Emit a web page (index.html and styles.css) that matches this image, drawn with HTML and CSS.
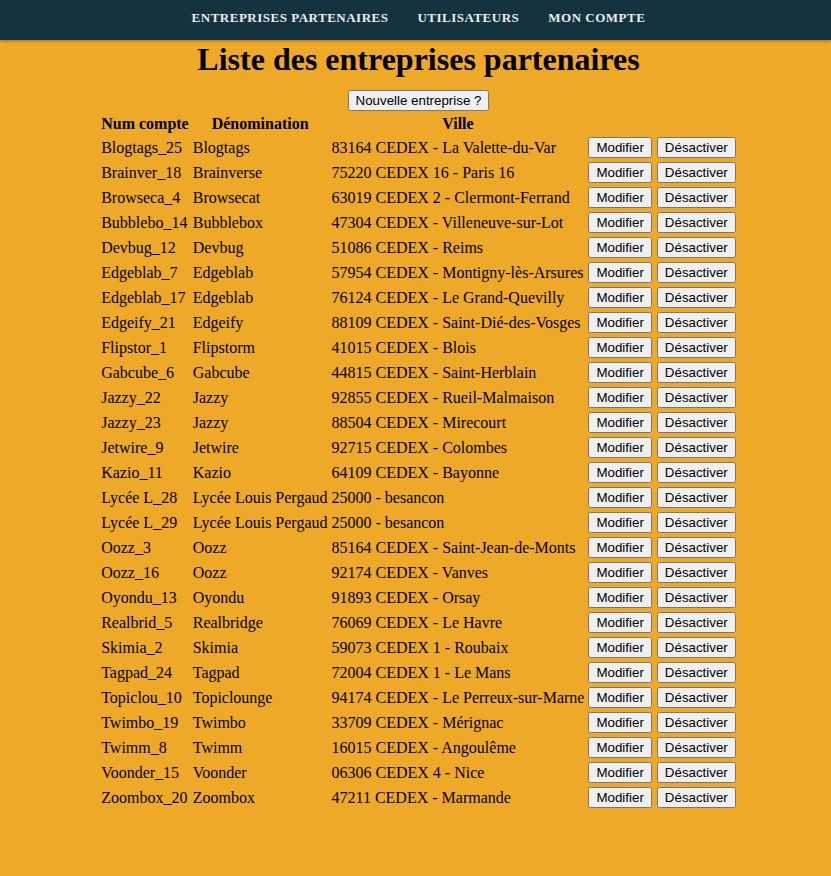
FILE: index.html
```html
<!DOCTYPE html>
<html lang="fr">
<head>
<meta charset="utf-8">
<title>Liste des entreprises partenaires</title>
<link rel="stylesheet" href="styles.css">
</head>
<body>
<nav class="topnav">
  <a class="nav-link" href="#">Entreprises partenaires</a>
  <a class="nav-link" href="#">Utilisateurs</a>
  <a class="nav-link" href="#">Mon compte</a>
</nav>
<main class="content">
  <h1 class="title">Liste des entreprises partenaires</h1>
  <div class="new-wrap"><button class="btn">Nouvelle entreprise ?</button></div>
  <table class="list">
    <thead>
      <tr><th>Num compte</th><th>Dénomination</th><th>Ville</th><th></th><th></th></tr>
    </thead>
    <tbody>
      <tr><td>Blogtags_25</td><td>Blogtags</td><td>83164 CEDEX - La Valette-du-Var</td><td><button class="btn btn-mod">Modifier</button></td><td><button class="btn">Désactiver</button></td></tr>
      <tr><td>Brainver_18</td><td>Brainverse</td><td>75220 CEDEX 16 - Paris 16</td><td><button class="btn btn-mod">Modifier</button></td><td><button class="btn">Désactiver</button></td></tr>
      <tr><td>Browseca_4</td><td>Browsecat</td><td>63019 CEDEX 2 - Clermont-Ferrand</td><td><button class="btn btn-mod">Modifier</button></td><td><button class="btn">Désactiver</button></td></tr>
      <tr><td>Bubblebo_14</td><td>Bubblebox</td><td>47304 CEDEX - Villeneuve-sur-Lot</td><td><button class="btn btn-mod">Modifier</button></td><td><button class="btn">Désactiver</button></td></tr>
      <tr><td>Devbug_12</td><td>Devbug</td><td>51086 CEDEX - Reims</td><td><button class="btn btn-mod">Modifier</button></td><td><button class="btn">Désactiver</button></td></tr>
      <tr><td>Edgeblab_7</td><td>Edgeblab</td><td>57954 CEDEX - Montigny-lès-Arsures</td><td><button class="btn btn-mod">Modifier</button></td><td><button class="btn">Désactiver</button></td></tr>
      <tr><td>Edgeblab_17</td><td>Edgeblab</td><td>76124 CEDEX - Le Grand-Quevilly</td><td><button class="btn btn-mod">Modifier</button></td><td><button class="btn">Désactiver</button></td></tr>
      <tr><td>Edgeify_21</td><td>Edgeify</td><td>88109 CEDEX - Saint-Dié-des-Vosges</td><td><button class="btn btn-mod">Modifier</button></td><td><button class="btn">Désactiver</button></td></tr>
      <tr><td>Flipstor_1</td><td>Flipstorm</td><td>41015 CEDEX - Blois</td><td><button class="btn btn-mod">Modifier</button></td><td><button class="btn">Désactiver</button></td></tr>
      <tr><td>Gabcube_6</td><td>Gabcube</td><td>44815 CEDEX - Saint-Herblain</td><td><button class="btn btn-mod">Modifier</button></td><td><button class="btn">Désactiver</button></td></tr>
      <tr><td>Jazzy_22</td><td>Jazzy</td><td>92855 CEDEX - Rueil-Malmaison</td><td><button class="btn btn-mod">Modifier</button></td><td><button class="btn">Désactiver</button></td></tr>
      <tr><td>Jazzy_23</td><td>Jazzy</td><td>88504 CEDEX - Mirecourt</td><td><button class="btn btn-mod">Modifier</button></td><td><button class="btn">Désactiver</button></td></tr>
      <tr><td>Jetwire_9</td><td>Jetwire</td><td>92715 CEDEX - Colombes</td><td><button class="btn btn-mod">Modifier</button></td><td><button class="btn">Désactiver</button></td></tr>
      <tr><td>Kazio_11</td><td>Kazio</td><td>64109 CEDEX - Bayonne</td><td><button class="btn btn-mod">Modifier</button></td><td><button class="btn">Désactiver</button></td></tr>
      <tr><td>Lycée L_28</td><td>Lycée Louis Pergaud</td><td>25000 - besancon</td><td><button class="btn btn-mod">Modifier</button></td><td><button class="btn">Désactiver</button></td></tr>
      <tr><td>Lycée L_29</td><td>Lycée Louis Pergaud</td><td>25000 - besancon</td><td><button class="btn btn-mod">Modifier</button></td><td><button class="btn">Désactiver</button></td></tr>
      <tr><td>Oozz_3</td><td>Oozz</td><td>85164 CEDEX - Saint-Jean-de-Monts</td><td><button class="btn btn-mod">Modifier</button></td><td><button class="btn">Désactiver</button></td></tr>
      <tr><td>Oozz_16</td><td>Oozz</td><td>92174 CEDEX - Vanves</td><td><button class="btn btn-mod">Modifier</button></td><td><button class="btn">Désactiver</button></td></tr>
      <tr><td>Oyondu_13</td><td>Oyondu</td><td>91893 CEDEX - Orsay</td><td><button class="btn btn-mod">Modifier</button></td><td><button class="btn">Désactiver</button></td></tr>
      <tr><td>Realbrid_5</td><td>Realbridge</td><td>76069 CEDEX - Le Havre</td><td><button class="btn btn-mod">Modifier</button></td><td><button class="btn">Désactiver</button></td></tr>
      <tr><td>Skimia_2</td><td>Skimia</td><td>59073 CEDEX 1 - Roubaix</td><td><button class="btn btn-mod">Modifier</button></td><td><button class="btn">Désactiver</button></td></tr>
      <tr><td>Tagpad_24</td><td>Tagpad</td><td>72004 CEDEX 1 - Le Mans</td><td><button class="btn btn-mod">Modifier</button></td><td><button class="btn">Désactiver</button></td></tr>
      <tr><td>Topiclou_10</td><td>Topiclounge</td><td>94174 CEDEX - Le Perreux-sur-Marne</td><td><button class="btn btn-mod">Modifier</button></td><td><button class="btn">Désactiver</button></td></tr>
      <tr><td>Twimbo_19</td><td>Twimbo</td><td>33709 CEDEX - Mérignac</td><td><button class="btn btn-mod">Modifier</button></td><td><button class="btn">Désactiver</button></td></tr>
      <tr><td>Twimm_8</td><td>Twimm</td><td>16015 CEDEX - Angoulême</td><td><button class="btn btn-mod">Modifier</button></td><td><button class="btn">Désactiver</button></td></tr>
      <tr><td>Voonder_15</td><td>Voonder</td><td>06306 CEDEX 4 - Nice</td><td><button class="btn btn-mod">Modifier</button></td><td><button class="btn">Désactiver</button></td></tr>
      <tr><td>Zoombox_20</td><td>Zoombox</td><td>47211 CEDEX - Marmande</td><td><button class="btn btn-mod">Modifier</button></td><td><button class="btn">Désactiver</button></td></tr>
    </tbody>
  </table>
</main>
</body>
</html>
```

FILE: styles.css
```css
html, body {
  margin: 0;
  padding: 0;
}
body {
  background: #efa928;
  font-family: "Liberation Serif", "Times New Roman", serif;
  font-size: 16px;
  color: #000;
  min-height: 876px;
}
.topnav {
  background: #14333e;
  height: 40px;
  display: flex;
  justify-content: center;
  align-items: center;
  gap: 29px;
  padding-left: 6px;
  box-shadow: 0 1px 3px rgba(0,0,0,0.35);
}
.nav-link {
  color: #ececec;
  text-decoration: none;
  text-transform: uppercase;
  font-weight: bold;
  font-size: 13px;
  letter-spacing: 0.5px;
  padding-bottom: 5px;
}
.content {
  padding-left: 6px;
}
.title {
  margin: 0;
  text-align: center;
  font-size: 32px;
  line-height: 37px;
  padding-top: 1px;
}
.new-wrap {
  text-align: center;
  margin-top: 12px;
}
.btn {
  font-family: Arial, "Liberation Sans", sans-serif;
  font-size: 13.333px;
  margin: 0;
}
.list {
  margin: 1px auto 0;
}
.list th, .list td {
  padding: 1px;
  text-align: left;
  white-space: nowrap;
}
.list th {
  text-align: center;
}
.btn-mod {
  margin-right: 1px;
}
```
